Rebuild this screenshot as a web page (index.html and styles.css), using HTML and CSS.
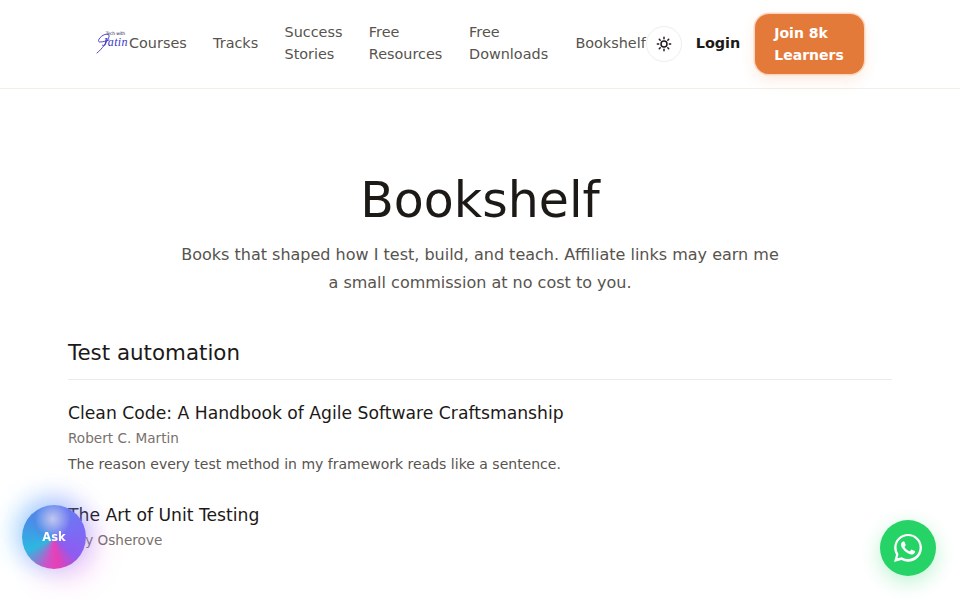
FILE: index.html
```html
<!DOCTYPE html>
<html lang="en">
<head>
<meta charset="utf-8">
<title>Bookshelf</title>
<link rel="stylesheet" href="styles.css">
</head>
<body>
<header class="site-header">
  <div class="header-inner">
    <a class="logo" href="#">
      <span class="logo-top">Tech with</span>
      <span class="logo-name">Jatin</span>
      <svg class="logo-swash" width="33" height="24" viewBox="0 0 33 24" fill="none" stroke="#3b36c4" stroke-width=".9" stroke-linecap="round">
        <path d="M1 22 C6 18 11 11 13 6 C14 3 10 2 6 5 C3 7 1 11 4 11 C7 11 10 10 13 9"/>
      </svg>
    </a>
    <nav class="nav">
      <a href="#">Courses</a>
      <a href="#">Tracks</a>
      <a href="#">Success Stories</a>
      <a href="#">Free Resources</a>
      <a href="#">Free Downloads</a>
      <a href="#">Bookshelf</a>
    </nav>
    <button class="theme-btn" aria-label="Toggle theme">
      <svg width="16" height="16" viewBox="0 0 24 24" fill="none" stroke="#1c1917" stroke-width="2.2" stroke-linecap="round">
        <circle cx="12" cy="12" r="4.5"/>
        <path d="M12 2v2M12 20v2M2 12h2M20 12h2M4.9 4.9l1.4 1.4M17.7 17.7l1.4 1.4M4.9 19.1l1.4-1.4M17.7 6.3l1.4-1.4"/>
      </svg>
    </button>
    <a class="login" href="#">Login</a>
    <a class="join" href="#">Join 8k Learners</a>
  </div>
</header>
<main class="page">
  <section class="hero">
    <h1>Bookshelf</h1>
    <p>Books that shaped how I test, build, and teach. Affiliate links may earn me a small commission at no cost to you.</p>
  </section>
  <section class="shelf">
    <h2>Test automation</h2>
    <article class="book">
      <h3>Clean Code: A Handbook of Agile Software Craftsmanship</h3>
      <div class="author">Robert C. Martin</div>
      <p>The reason every test method in my framework reads like a sentence.</p>
    </article>
    <article class="book">
      <h3>The Art of Unit Testing</h3>
      <div class="author">Roy Osherove</div>
    </article>
  </section>
</main>
<button class="ask">Ask</button>
<a class="whatsapp" href="#" aria-label="WhatsApp">
  <svg width="28" height="28" viewBox="0 0 24 24" fill="#fff">
    <path d="M17.47 14.38c-.3-.15-1.76-.87-2.03-.97-.27-.1-.47-.15-.67.15-.2.3-.77.97-.94 1.16-.17.2-.35.22-.64.08-.3-.15-1.26-.46-2.39-1.48-.88-.79-1.48-1.76-1.65-2.06-.17-.3-.02-.46.13-.6.13-.14.3-.35.45-.52.15-.17.2-.3.3-.5.1-.2.05-.37-.03-.52-.07-.15-.67-1.62-.92-2.21-.24-.58-.49-.5-.67-.51h-.57c-.2 0-.52.07-.79.37-.27.3-1.04 1.02-1.04 2.48s1.07 2.88 1.21 3.07c.15.2 2.1 3.2 5.08 4.49.71.3 1.26.49 1.7.63.71.22 1.36.19 1.87.12.57-.09 1.76-.72 2.01-1.41.25-.7.25-1.29.17-1.41-.07-.13-.27-.2-.57-.35zM12.05 21.5h-.01a9.87 9.87 0 0 1-5.03-1.38l-.36-.21-3.74.98 1-3.65-.24-.37a9.86 9.86 0 0 1-1.51-5.26c0-5.45 4.44-9.88 9.89-9.88 2.64 0 5.12 1.03 6.99 2.9a9.83 9.83 0 0 1 2.89 6.99c0 5.45-4.44 9.88-9.89 9.88zM20.46 3.49A11.82 11.82 0 0 0 12.05 0C5.5 0 .16 5.34.16 11.89c0 2.1.55 4.14 1.59 5.95L.06 24l6.3-1.65a11.88 11.88 0 0 0 5.68 1.45h.01c6.55 0 11.89-5.34 11.89-11.89a11.82 11.82 0 0 0-3.48-8.42z"/>
  </svg>
</a>
</body>
</html>
```
FILE: styles.css
```css
* { box-sizing: border-box; }
html, body { margin: 0; height: 100%; overflow: hidden; background: #fff; }
body { font-family: "DejaVu Sans", sans-serif; color: #1c1917; }
a { color: inherit; text-decoration: none; }

.site-header { height: 89px; border-bottom: 1px solid #f2efe6; }
.header-inner { height: 88px; width: 768px; margin: 0 auto; display: flex; align-items: center; }

.logo { position: relative; width: 33px; height: 26px; flex: none; display: flex; flex-direction: column; align-items: flex-end; line-height: 1; }
.logo-top { font-size: 4.5px; line-height: 5px; letter-spacing: -0.2px; color: #1e1b4b; margin-right: 4px; white-space: nowrap; }
.logo-name { font-family: "Liberation Serif", serif; font-style: italic; font-size: 12px; line-height: 12px; color: #3b36c4; letter-spacing: 0.4px; margin-right: 1px; }
.logo-swash { position: absolute; left: 0; top: 0; }

.nav { display: flex; align-items: center; gap: 26.3px; margin-bottom: 2px; font-size: 14.4px; line-height: 22px; color: #57534e; flex: none; }
.nav a { display: block; }
.nav a:nth-child(3) { width: 58px; }
.nav a:nth-child(4) { width: 74px; }
.nav a:nth-child(5) { width: 80px; }

.theme-btn { width: 36px; height: 36px; flex: none; padding: 0; border: 1px solid #f0eeea; border-radius: 50%; background: #fff; display: flex; align-items: center; justify-content: center; }
.login { margin-left: 14px; margin-bottom: 2px; font-size: 14.4px; font-weight: 700; color: #1c1917; }
.join { margin-left: 15px; width: 109px; height: 60px; padding: 8px 19px; border-radius: 14px; background: #e47a3a; color: #fff; font-size: 14px; font-weight: 700; line-height: 22px; box-shadow: 0 0 0 1.5px #fbd5c0, 0 6px 14px rgba(228,122,58,.16); }

.page { width: 824px; margin: 0 auto; }
.hero { text-align: center; padding-top: 80px; }
.hero h1 { margin: 0; font-size: 49px; font-weight: 400; line-height: 64px; color: #1c1917; }
.hero p { margin: 8px auto 0; width: 610px; font-size: 16px; line-height: 28px; color: #57534e; }

.shelf { margin-top: 41px; }
.shelf h2 { margin: 0; padding-bottom: 11px; font-size: 21.4px; font-weight: 400; line-height: 30px; border-bottom: 1px solid #eeebe4; }
.book { margin-top: 21px; }
.book + .book { margin-top: 29px; }
.book h3 { margin: 0; font-size: 17.2px; font-weight: 400; line-height: 24px; }
.author { margin-top: 3px; font-size: 13.6px; line-height: 20px; color: #78716c; }
.book p { margin: 6px 0 0; font-size: 14px; line-height: 20px; color: #57534e; }

.ask { position: fixed; left: 22px; top: 505px; width: 64px; height: 64px; padding: 0; border: 0; border-radius: 50%; color: #fff; font: 700 11.5px "DejaVu Sans", sans-serif;
  background:
    radial-gradient(circle at 48% 22%, rgba(205,205,240,.9) 0, rgba(150,150,240,0) 30%),
    conic-gradient(from 0deg at 50% 52%, #5f83ee 0deg, #7a6cf4 70deg, #8f5cf0 130deg, #e83fb4 172deg, #cf50c8 195deg, #2cb8e0 245deg, #4a8ce8 310deg, #5f83ee 360deg);
  box-shadow: -8px -4px 26px rgba(80,200,255,.42), 10px 10px 28px rgba(235,90,225,.28), 2px -8px 24px rgba(120,110,255,.32); }

.whatsapp { position: fixed; left: 880px; top: 520px; width: 56px; height: 56px; border-radius: 50%; background: #25d366; display: flex; align-items: center; justify-content: center; box-shadow: 0 6px 20px rgba(37,211,102,.3); }
```
